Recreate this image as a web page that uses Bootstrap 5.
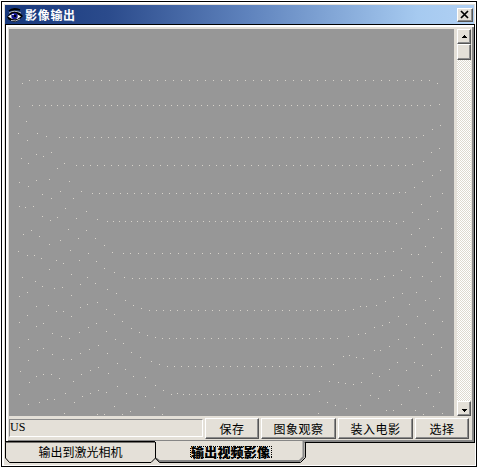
<!DOCTYPE html>
<html lang="zh-CN">
<head>
<meta charset="utf-8">
<meta name="viewport" content="width=device-width, initial-scale=1">
<title>影像输出</title>
<link href="https://cdn.jsdelivr.net/npm/bootstrap@5.3.0/dist/css/bootstrap.min.css" rel="stylesheet">
<style>
:root{--face:#e4e0d8;--shade:#868686}
html,body{height:100%}
body{background:#fff;overflow:hidden;font:12px/14px "Liberation Serif","Noto Sans CJK SC",sans-serif;color:#000}
.window-frame{width:476px;height:466px;margin:1px 0 0 1px;border:1px solid #000;background:var(--face);padding:3px 0 0 3px;box-shadow:inset 2px 2px #fff,inset -1px -1px #fff}
.title-strip{width:469px;height:19px;background:linear-gradient(90deg,#17387c 0,#2b4b8c 22%,#5f83bd 52%,#a6caf0 88%,#b0d0f4);padding-left:2px;padding-right:1px}
.title-strip h1{font:bold 12px/18px "Noto Sans CJK SC",sans-serif;letter-spacing:.7px;color:#fff;margin-left:2px}
.raised{background:var(--face);border:1px solid;border-color:#fff #555 #555 #fff;box-shadow:inset -1px -1px #8c8c8c;border-radius:0;padding:0;color:#000}
.close-box{width:16px;height:14px;line-height:0}
.panel-box{width:470px;height:419px;border:1px solid #000;padding:4px 0 0 3px;box-shadow:inset 2px 2px #fff,inset -2px -2px var(--shade)}
.film{width:445px;height:387px;background:#979797;flex:none}
.scroller{width:14px;height:387px;margin-left:3px;background:repeating-conic-gradient(#fff 0 25%,#dedacf 0 50%) 0 0/2px 2px}
.scroller .raised{width:14px;height:15px;line-height:0}
.scroller .thumb{height:16px}
.command-row{height:23px;padding-top:2px;gap:2px}
.status-field{width:194px;height:18px;border:1px solid;border-color:#8c8c8c #fff #fff #8c8c8c;line-height:15px;margin-top:1px;font-size:12px}
.cmd{height:21px;font:12px/18px "Noto Sans CJK SC",sans-serif;letter-spacing:.5px}
.w-a{width:54px}.w-b{width:75px}
.sheet-tabs{width:470px;height:23px;margin-top:-1px}
.sheet-tabs svg{display:block;overflow:visible}
.sheet-tabs text{font:12px "Noto Sans CJK SC",sans-serif}
.sheet-tabs .current{font-weight:900;font-size:13px}
</style>
<script src="https://cdn.jsdelivr.net/npm/bootstrap@5.3.0/dist/js/bootstrap.bundle.min.js"></script>
</head>
<body>
<main class="window-frame">
  <header class="title-strip d-flex align-items-center">
    <svg width="16" height="16" viewBox="0 0 16 16"><path d="M2 4Q6 0 13 3M1 10L4 6Q8 4 12 6L15 9L11 13Q7 16 2 12z" fill="#000" stroke="#000" stroke-width="1.500"/><path d="M1 9.500Q7 4 14 9.500Q8 15 1 9.500z" fill="#fff"/><circle cx="7.5" cy="9" r="3.200" fill="#15158d"/><path d="M7 8h2v2H7z" fill="#000"/><path d="M5 7h2v1H5z" fill="#dce4ff"/><path d="M2 6Q7 2.500 14 6M4 13.500Q9 15 13 12" fill="none" stroke="#c9cbd2" stroke-width=".9"/></svg>
    <h1 class="mb-0">影像输出</h1>
    <button class="raised close-box ms-auto" aria-label="关闭"><svg width="12" height="11" viewBox="0 0 12 11"><path d="M2 2L9 9M9 2L2 9" stroke="#000" stroke-width="1.7"/></svg></button>
  </header>
  <section class="panel-box">
    <div class="d-flex">
      <svg class="film" id="film" viewBox="9 29 445 387" shape-rendering="crispEdges"></svg>
      <div class="scroller d-flex flex-column">
        <button class="raised" aria-label="向上"><svg width="11" height="12" viewBox="0 0 11 12" shape-rendering="crispEdges"><path d="M5 4h1v1h1v1h1v1H3V6h1V5h1z"/></svg></button>
        <div class="raised thumb"></div>
        <button class="raised mt-auto" aria-label="向下"><svg width="11" height="12" viewBox="0 0 11 12" shape-rendering="crispEdges"><path d="M3 6h5v1H7v1H6v1H5V8H4V7H3z"/></svg></button>
      </div>
    </div>
    <div class="command-row d-flex">
      <div class="status-field">US</div>
      <button class="raised cmd w-a">保存</button>
      <button class="raised cmd w-b">图象观察</button>
      <button class="raised cmd w-b">装入电影</button>
      <button class="raised cmd w-a">选择</button>
    </div>
  </section>
  <nav class="sheet-tabs">
    <svg width="470" height="23" viewBox="5 442 470 23">
      <path d="M5.5 442.5V458L9.500 462.500H151L155.500 458V442.500" fill="#e4e0d8" stroke="#000"/>
      <path d="M6 442H155V441H6z" fill="#000"/>
      <path d="M155 441H304.500V457L300 461.500H160L155.500 457.500z" fill="#e4e0d8"/>
      <path d="M156 458.500L159.500 461H299.500L303.500 457V441" fill="none" stroke="#868686" stroke-width="2"/>
      <path d="M155.500 442V458L159.500 462.500H300.500L305.500 457.500V442.500H475" fill="none" stroke="#000"/>
      <text x="38.500" y="456.500" textLength="84">输出到激光相机</text>
      <text x="191" y="456.500" textLength="79" class="current">输出视频影像</text>
      <path d="M190.500 446.500H271.500V457.500H190.500z" fill="none" stroke="#000" stroke-dasharray="1 1" shape-rendering="crispEdges"/>
    </svg>
  </nav>
</main>
<script>
// Horizontal grid rows: y, first x, last x, step
const rows = [[80,29,429,8],[105,39,417,6],[137,59,416,7],[165,76,405,7],[193,92,393,7],[221,107,389,6],[253,138,370,8],[278,145,362,6],[310,149,345,7],[338,162,337,7],[366,167,321,7],[394,183,309,6]];
// Loose grid points: origin followed by x,y pairs in thirds of a pixel
const groups = [
[0,60,"67,70 58,139 97,136 79,184 55,220 82,241 112,220 139,229 154,277 109,283 130,289 64,295 85,310 172,325 193,310 58,367 85,379 109,361 148,358 208,364 127,403 154,415 181,394 220,415 244,394 58,439 76,442 100,439 127,469 151,481 172,472 196,445 229,475 259,454 292,478 205,508 259,511 94,511 70,523 118,529 235,535 286,535"],
[238,60,"598,70 559,136 577,136 604,133 607,196 583,208 556,226 604,265 580,277 556,304 523,313 607,331 583,346 553,364 529,382 502,397 484,397 613,400 577,409 550,433 523,457 598,454 571,478 496,484 475,490 544,505 610,505 520,523 586,532"],
[0,235,"148,28 181,16 211,46 265,55 313,31 337,52 370,55 391,55 55,49 82,61 103,61 124,70 169,76 190,85 238,76 289,79 148,103 214,118 262,127 313,100 343,112 373,127 397,130 418,130 67,127 106,139 127,154 82,172 58,184 163,160 187,157 241,148 286,145 214,181 322,163 349,175 376,196 400,211 424,220 109,214 145,211 169,229 190,229 241,217 262,208 292,202 319,223 214,244 343,238 82,241 58,262 109,274 130,265 157,295 184,304 208,310 238,292 265,277 289,265 319,289 367,259 394,280 418,292 442,301 466,307 346,313 370,325 85,313 58,337 112,346 130,340 157,358 190,373 214,373 241,355 268,343 295,331 322,355 394,352 421,367 454,379 478,388 85,376 61,409 88,442 109,424 130,418 154,418 178,430 220,439 244,418 271,406 295,397 325,415 352,385 376,403 400,424 436,427 466,451 490,466 514,478 532,475 58,478 85,508 118,502 142,493 163,493 196,475 223,502 247,484 271,475 295,466 319,472 352,454 379,475 412,478 436,484 343,514 391,529 463,517 193,535 292,538 313,538 367,538 487,538"],
[238,235,"418,55 442,49 466,49 490,40 520,58 541,58 562,34 586,7 610,52 583,82 397,133 418,133 439,124 466,121 490,106 517,127 553,124 580,139 607,124 346,223 367,214 385,214 415,211 442,199 466,187 493,175 535,172 514,208 562,196 604,190 586,226 613,259 331,304 361,298 382,295 409,277 433,271 454,262 481,244 505,268 538,244 562,265 586,298 610,337 286,388 316,364 334,361 355,367 376,370 409,346 427,346 454,334 481,313 505,340 529,307 553,328 580,358 244,469 274,439 301,442 322,445 346,448 370,442 403,415 424,424 454,403 478,382 505,406 529,382 553,391 580,421 604,406 268,502 292,511 241,535 325,520 367,511 397,481 421,490 454,466 481,451 514,466 541,457 565,475 604,472 490,508 445,526 466,526 532,526 556,538 586,514 613,535"]];
let d = "";
for (const [y,a,b,s] of rows) for (let x=a; x<=b; x+=s) d += `M${x} ${y}h1v1h-1z`;
for (const [ox,oy,list] of groups) for (const pair of list.split(" ")) {
  const [x,y] = pair.split(",").map(v => Math.floor(v/3));
  d += `M${ox+x} ${oy+y}h1v1h-1z`;
}
document.getElementById("film").innerHTML = `<path fill="#d6d2ca" d="${d}"/>`;
</script>
</body>
</html>
